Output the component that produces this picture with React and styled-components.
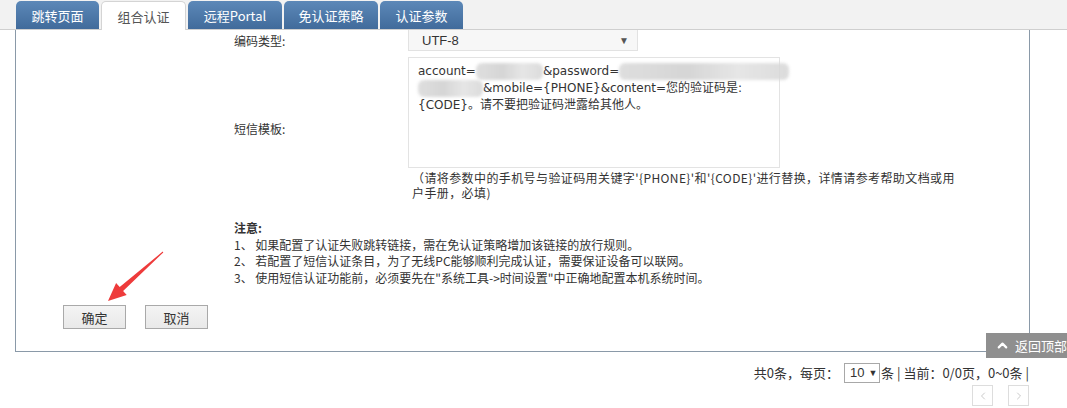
import React from "react";
import styled, { createGlobalStyle } from "styled-components";
import { ChevronLeft, ChevronRight, ChevronUp } from "lucide-react";

const GlobalStyle = createGlobalStyle`
  html, body {
    margin: 0;
    padding: 0;
    background: #ffffff;
    font-family: "Microsoft YaHei", "Noto Sans CJK SC", sans-serif;
    color: #333333;
  }
`;

const Page = styled.div`
  position: relative;
  width: 1067px;
  height: 408px;
  overflow: hidden;
`;

const TabBar = styled.div`
  height: 29px;
  background: #f2f2f2;
  border-bottom: 1px solid #cfcfcf;
  display: flex;
  align-items: flex-end;
  gap: 2px;
  padding-left: 16px;
`;

const Tab = styled.div`
  width: ${(p) => p.w}px;
  height: ${(p) => (p.active ? 29 : 28)}px;
  box-sizing: border-box;
  border-radius: 5px 5px 0 0;
  display: flex;
  align-items: center;
  justify-content: center;
  font-size: 13px;
  margin-bottom: ${(p) => (p.active ? -1 : 0)}px;
  background: ${(p) =>
    p.active ? "#ffffff" : "linear-gradient(#5c88b8, #416b9b)"};
  color: ${(p) => (p.active ? "#555555" : "#ffffff")};
  border: ${(p) => (p.active ? "1px solid #d4d4d4" : "none")};
  border-bottom: none;
`;

const Panel = styled.div`
  margin-left: 15px;
  width: 1015px;
  box-sizing: border-box;
  border: 1px solid #8a99a8;
  border-top: none;
  padding-bottom: 22px;
`;

const FormGrid = styled.div`
  display: grid;
  grid-template-columns: 174px auto;
  row-gap: 6px;
  align-items: center;
  padding-left: 218px;
`;

const Label = styled.div`
  font-size: 12px;
  color: #333333;
`;

const SelectBox = styled.div`
  width: 230px;
  height: 21px;
  box-sizing: border-box;
  background: #f7f7f7;
  border: 1px solid #e2e2e2;
  border-top: none;
  display: flex;
  align-items: center;
  justify-content: space-between;
  padding: 0 8px 0 13px;
  font-family: "Liberation Sans", Arial, sans-serif;
  font-size: 13px;
  color: #333333;
`;

const Caret = styled.span`
  font-size: 10px;
  color: #555555;
`;

const Field = styled.div`
  display: flex;
  flex-direction: column;
`;

const TextArea = styled.div`
  width: 372px;
  height: 111px;
  box-sizing: border-box;
  border: 1px solid #e3e3e3;
  padding: 5px 9px;
  font-family: "DejaVu Sans", "Noto Sans CJK SC", sans-serif;
  font-size: 12px;
  line-height: 17px;
  color: #333333;
  white-space: nowrap;
`;

const Blur = styled.span`
  display: inline-block;
  width: ${(p) => p.w}px;
  height: 17px;
  vertical-align: top;
  background: linear-gradient(90deg, #d9d9d9, #cfcfcf 40%, #e2e2e2 70%, #d6d6d6);
  filter: blur(1.5px);
  border-radius: 6px;
  opacity: 0.85;
`;

const Hint = styled.div`
  width: 550px;
  margin-top: 2px;
  margin-left: 4px;
  font-size: 12px;
  line-height: 15px;
  letter-spacing: 0.4px;
  color: #333333;
`;

const Notes = styled.div`
  margin-top: 20px;
  padding-left: 218px;
  font-size: 12px;
  line-height: 16.5px;
  color: #333333;
`;

const NoteTitle = styled.div`
  font-weight: bold;
`;

const Buttons = styled.div`
  display: flex;
  gap: 19px;
  margin-top: 19px;
  padding-left: 47px;
`;

const Button = styled.button`
  width: 63px;
  height: 24px;
  background: linear-gradient(#f4f4f4, #e9e9e9);
  border: 1px solid #a9a9a9;
  font-family: "Microsoft YaHei", "Noto Sans CJK SC", sans-serif;
  font-size: 13px;
  color: #333333;
  padding: 0;
`;

const Pager = styled.div`
  display: flex;
  justify-content: flex-end;
  align-items: center;
  padding-right: 38px;
  margin-top: 10px;
  height: 21px;
  font-size: 13px;
  color: #333333;
`;

const PageSize = styled.div`
  width: 36px;
  height: 20px;
  box-sizing: border-box;
  border: 1px solid #a8a8a8;
  margin: 0 1px 0 5px;
  display: flex;
  align-items: center;
  padding-left: 5px;
  gap: 4px;
  font-family: "Liberation Sans", Arial, sans-serif;
  font-size: 13px;
`;

const SmallCaret = styled.span`
  font-size: 9px;
`;

const NavRow = styled.div`
  display: flex;
  justify-content: flex-end;
  gap: 15px;
  padding-right: 38px;
  margin-top: 2px;
`;

const NavBox = styled.div`
  width: 21px;
  height: 21px;
  box-sizing: border-box;
  border: 1px solid #dddddd;
  display: flex;
  align-items: center;
  justify-content: center;
  color: #b8b8b8;
`;

const BackTop = styled.div`
  position: absolute;
  left: 986px;
  top: 333px;
  width: 81px;
  height: 25px;
  background: #8f8f8f;
  color: #ffffff;
  display: flex;
  align-items: center;
  gap: 5px;
  padding-left: 9px;
  box-sizing: border-box;
  font-size: 13px;
  white-space: nowrap;
`;

const Arrow = styled.svg`
  position: absolute;
  left: 0;
  top: 0;
  pointer-events: none;
`;

export default function App() {
  return (
    <Page>
      <GlobalStyle />
      <TabBar>
        <Tab w={83}>跳转页面</Tab>
        <Tab w={85} active>
          组合认证
        </Tab>
        <Tab w={94}>远程Portal</Tab>
        <Tab w={94}>免认证策略</Tab>
        <Tab w={83}>认证参数</Tab>
      </TabBar>
      <Panel>
        <FormGrid>
          <Label>编码类型:</Label>
          <SelectBox>
            UTF-8
            <Caret>▼</Caret>
          </SelectBox>
          <Label>短信模板:</Label>
          <Field>
            <TextArea>
              account=<Blur w={67} />&amp;password=<Blur w={170} />
              <br />
              <Blur w={65} />
              &amp;mobile=&#123;PHONE&#125;&amp;content=您的验证码是:
              <br />
              &#123;CODE&#125;。请不要把验证码泄露给其他人。
            </TextArea>
            <Hint>
              （请将参数中的手机号与验证码用关键字'&#123;PHONE&#125;'和'&#123;CODE&#125;'进行替换，详情请参考帮助文档或用户手册，必填)
            </Hint>
          </Field>
        </FormGrid>
        <Notes>
          <NoteTitle>注意:</NoteTitle>
          <div>1、 如果配置了认证失败跳转链接，需在免认证策略增加该链接的放行规则。</div>
          <div>2、 若配置了短信认证条目，为了无线PC能够顺利完成认证，需要保证设备可以联网。</div>
          <div>3、 使用短信认证功能前，必须要先在"系统工具-&gt;时间设置"中正确地配置本机系统时间。</div>
        </Notes>
        <Buttons>
          <Button>确定</Button>
          <Button>取消</Button>
        </Buttons>
      </Panel>
      <Pager>
        共0条，每页：
        <PageSize>
          10 <SmallCaret>▼</SmallCaret>
        </PageSize>
        条 | 当前：0/0页，0~0条 |
      </Pager>
      <NavRow>
        <NavBox>
          <ChevronLeft size={12} strokeWidth={1.5} />
        </NavBox>
        <NavBox>
          <ChevronRight size={12} strokeWidth={1.5} />
        </NavBox>
      </NavRow>
      <BackTop>
        <ChevronUp size={15} strokeWidth={3.5} />
        返回顶部
      </BackTop>
      <Arrow width="1067" height="408">
        <polygon
          points="108,301 116.1,283 119.7,287.1 162.7,251.6 163.3,252.4 123.1,290.9 126.7,295"
          fill="#ee3b3b"
        />
      </Arrow>
    </Page>
  );
}
